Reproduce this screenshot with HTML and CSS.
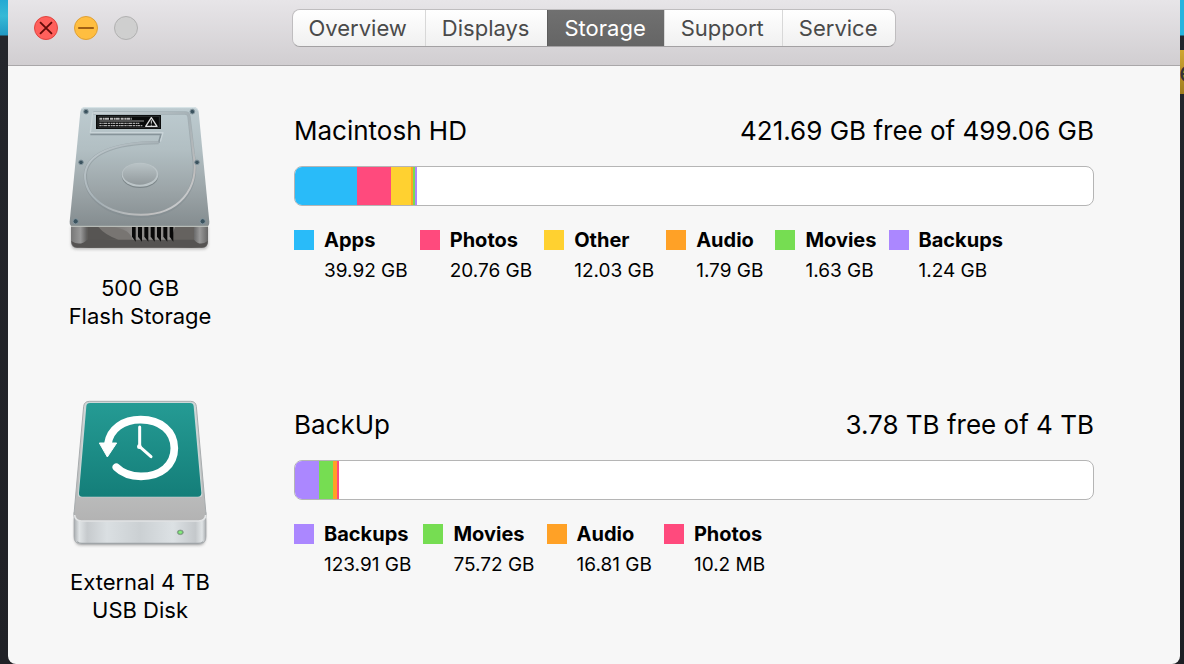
FILE: index.html
```html
<!DOCTYPE html>
<html lang="en">
<head>
  <meta charset="UTF-8" />
  <meta name="viewport" content="width=device-width, initial-scale=1" />
  <title>Storage</title>
  <link rel="stylesheet" href="styles.css">
</head>
<body>
  <div class="desktop-left"></div>

  <div class="window">
    <header class="titlebar">
      <div class="controls">
        <button class="control close" type="button" aria-label="Close">
          <svg viewBox="0 0 24 24"><path d="M5.5 5.5 18.5 18.5M18.5 5.5 5.5 18.5" /></svg>
        </button>
        <button class="control minimize" type="button" aria-label="Minimize">
          <svg viewBox="0 0 24 24"><path d="M3.5 12H20.5" /></svg>
        </button>
        <button class="control zoom" type="button" aria-label="Zoom" disabled></button>
      </div>
      <nav class="tabs">
        <button type="button">Overview</button>
        <button type="button">Displays</button>
        <button type="button" class="active">Storage</button>
        <button type="button">Support</button>
        <button type="button">Service</button>
      </nav>
    </header>

    <main>
      <section class="volume">
        <div class="drive">
          <svg class="drive-icon" viewBox="0 0 480 495" aria-hidden="true">
            <defs>
              <linearGradient id="hdTop" x1="0" y1="0" x2="0" y2="1">
                <stop offset="0" stop-color="#bdcbd0" />
                <stop offset=".35" stop-color="#b2bfc3" />
                <stop offset=".7" stop-color="#9ba4a7" />
                <stop offset="1" stop-color="#848c8f" />
              </linearGradient>
              <linearGradient id="hdFront" x1="0" y1="0" x2="1" y2="0">
                <stop offset="0" stop-color="#777" />
                <stop offset=".07" stop-color="#999" />
                <stop offset=".13" stop-color="#4c4b4a" />
                <stop offset=".3" stop-color="#777573" />
                <stop offset=".43" stop-color="#8c8a88" />
                <stop offset=".75" stop-color="#8d8b89" />
                <stop offset=".88" stop-color="#555" />
                <stop offset=".94" stop-color="#999" />
                <stop offset="1" stop-color="#666" />
              </linearGradient>
              <linearGradient id="hdRidge" x1="0" y1="0" x2="1" y2="1">
                <stop offset="0" stop-color="#cdd6da" />
                <stop offset=".5" stop-color="#a5b0b5" />
                <stop offset=".8" stop-color="#c0bfbf" />
                <stop offset="1" stop-color="#d3dbe0" />
              </linearGradient>
              <linearGradient id="hdHub" x1="0" y1="0" x2="0" y2="1">
                <stop offset="0" stop-color="#b9c3c6" />
                <stop offset="1" stop-color="#929a9d" />
              </linearGradient>
              <filter id="soft" x="-10%" y="-10%" width="120%" height="120%">
                <feGaussianBlur stdDeviation="5" />
              </filter>
            </defs>
            <path d="M34 395H444V448Q444 463 428 463H50Q34 463 34 448Z" fill="#888" opacity=".6" filter="url(#soft)" />
            <path d="M33 390H444V440Q444 458 426 458H51Q33 458 33 440Z" fill="url(#hdFront)" />
            <path d="M82 396H150Q215 400 218 440H82Z" fill="#787572" />
            <path d="M82 396H115Q135 420 175 434L82 436Z" fill="#575553" />
            <path d="M345 396H402V440H330Z" fill="#65625f" />
            <path d="M34 438Q60 455 82 434H402Q420 455 443 438Q442 458 426 458H51Q36 458 34 438Z" fill="#555352" />
            <g fill="#090909">
              <path d="M216 396H227V440L216 425Z" /><path d="M234 396H246V440L234 425Z" />
              <path d="M253 396H265V440L253 425Z" /><path d="M272 396H284V440L272 425Z" />
              <path d="M291 396H303V440L291 425Z" /><path d="M310 396H322V440L310 425Z" />
              <path d="M329 396H340V440L329 425Z" />
            </g>
            <path d="M75 37H402Q414 37 416 51L448 380Q449 395 436 395H43Q28 395 29 380L61 51Q63 37 75 37Z" fill="url(#hdTop)" />
            <path d="M64 41Q69 38 77 38H402Q411 38 414 47" fill="none" stroke="#dae5e9" stroke-width="3" />
            <path d="M33 394H444" stroke="#c5c8c2" stroke-width="3" />
            <path d="M91 118H303L296 143" fill="none" stroke="#87949a" stroke-width="5" stroke-linejoin="round" />
            <path d="M98 53L91 113H309L301 140" fill="none" stroke="#c9d4d8" stroke-width="4" stroke-linejoin="round" />
            <path d="M100 54H375Q386 54 387 65L400 180C419 285 358 363 243 363C139 363 75 307 76 240C79 180 157 143 296 143" fill="none" stroke="#7d888c" stroke-width="10" opacity=".4" />
            <path d="M100 54H375Q386 54 387 65L401 180C419 282 356 359 243 359C139 359 74 303 75 240C79 178 157 142 296 142" fill="none" stroke="url(#hdRidge)" stroke-width="6" />
            <ellipse cx="240" cy="243" rx="55" ry="36" fill="#7d878a" />
            <ellipse cx="240" cy="239" rx="55" ry="36" fill="#bcc5c8" />
            <ellipse cx="239" cy="237" rx="51" ry="32" fill="url(#hdHub)" />
            <path d="M108 60H303V102H108Z" fill="#0a0b0b" />
            <path d="M114 64H298V98H114Z" fill="none" stroke="#737a7c" stroke-width="1" />
            <path d="M118 71H216" stroke="#bbb" stroke-width="6" stroke-dasharray="9 2 5 1 12 3" />
            <path d="M118 78H252" stroke="#ddd" stroke-width="2" />
            <path d="M118 85H238M118 92H247" stroke="#aaa" stroke-width="4" stroke-dasharray="7 2 4 1 9 2" />
            <path d="M274 68L291 94H257Z" fill="none" stroke="#ddd" stroke-width="4" stroke-linejoin="round" />
            <path d="M274 76V86M274 89V92" stroke="#ddd" stroke-width="3" />
            <g fill="#3b535f" stroke="#86979f" stroke-width="3">
              <circle cx="78" cy="50" r="7" /><circle cx="397" cy="50" r="7" />
              <circle cx="63" cy="202" r="7" /><circle cx="411" cy="202" r="7" />
              <circle cx="47" cy="379" r="8" /><circle cx="428" cy="379" r="8" />
            </g>
          </svg>
          <p>500 GB<br>Flash Storage</p>
        </div>
        <div class="usage">
          <div class="heading">
            <h2>Macintosh HD</h2>
            <span>421.69 GB free of 499.06 GB</span>
          </div>
          <div class="bar">
            <i class="apps" style="width: 7.8%"></i>
            <i class="photos" style="width: 4.25%"></i>
            <i class="other" style="width: 2.5%"></i>
            <i class="audio" style="width: .25%"></i>
            <i class="movies" style="width: .25%"></i>
            <i class="backups" style="width: .25%"></i>
          </div>
          <ul class="legend">
            <li><i class="apps"></i><div><b>Apps</b><span>39.92 GB</span></div></li>
            <li><i class="photos"></i><div><b>Photos</b><span>20.76 GB</span></div></li>
            <li><i class="other"></i><div><b>Other</b><span>12.03 GB</span></div></li>
            <li><i class="audio"></i><div><b>Audio</b><span>1.79 GB</span></div></li>
            <li><i class="movies"></i><div><b>Movies</b><span>1.63 GB</span></div></li>
            <li><i class="backups"></i><div><b>Backups</b><span>1.24 GB</span></div></li>
          </ul>
        </div>
      </section>

      <section class="volume">
        <div class="drive">
          <svg class="drive-icon" viewBox="0 0 480 495" aria-hidden="true">
            <defs>
              <linearGradient id="tmTeal" x1="0" y1="0" x2="0" y2="1">
                <stop offset="0" stop-color="#259b94" />
                <stop offset="1" stop-color="#147e79" />
              </linearGradient>
              <linearGradient id="tmFront" x1="0" y1="0" x2="1" y2="0">
                <stop offset="0" stop-color="#a8acaf" />
                <stop offset=".04" stop-color="#e0e4e6" />
                <stop offset=".1" stop-color="#c6cacd" />
                <stop offset=".25" stop-color="#dadfe2" />
                <stop offset=".5" stop-color="#cbd0d3" />
                <stop offset=".75" stop-color="#dce1e4" />
                <stop offset=".92" stop-color="#c4c8cb" />
                <stop offset=".97" stop-color="#e0e4e6" />
                <stop offset="1" stop-color="#a8acaf" />
              </linearGradient>
              <linearGradient id="tmTop" x1="0" y1="0" x2="0" y2="1">
                <stop offset="0" stop-color="#d5d8d9" />
                <stop offset="1" stop-color="#b3b3b3" />
              </linearGradient>
            </defs>
            <path d="M44 390H436V446Q436 469 414 469H66Q44 469 44 446Z" fill="#777" opacity=".6" filter="url(#soft)" />
            <path d="M42 370H438V443Q438 465 416 465H64Q42 465 42 443Z" fill="url(#tmFront)" stroke="#a4a8aa" stroke-width="2" />
            <path d="M88 37H392Q407 37 409 52L438 375Q438 395 417 395H63Q42 395 42 375L71 52Q73 37 88 37Z" fill="url(#tmTop)" stroke="#a7acae" stroke-width="3" />
            <path d="M44 378Q45 395 64 396H416Q436 395 437 378" fill="none" stroke="#e3e5e6" stroke-width="5" />
            <path d="M51 458Q57 463 66 463H414Q424 463 430 458" fill="none" stroke="#a0a5a8" stroke-width="4" />
            <path d="M88 40H392Q404 40 406 52L427 315Q428 325 417 325H63Q53 325 54 315L75 52Q76 40 88 40Z" fill="#cbd7d7" />
            <path d="M90 42H390Q400 42 401 52L424 312Q424 323 413 323H67Q56 323 57 312L79 52Q80 42 90 42Z" fill="url(#tmTeal)" />
            <path d="M144 163C151 120 189 92 242 92C302 92 343 127 343 178C343 228 303 262 243 262C213 262 187 253 169 235" fill="none" stroke="#fff" stroke-width="23" stroke-linecap="round" />
            <path d="M118 162H170L142 204Z" fill="#fff" stroke="#fff" stroke-width="3" stroke-linejoin="round" />
            <path d="M239 114V173L273 203" fill="none" stroke="#fff" stroke-width="9" stroke-linecap="round" stroke-linejoin="round" />
            <circle cx="238" cy="173" r="7" fill="#fff" />
            <ellipse cx="361" cy="430" rx="9" ry="7" fill="#6fae73" stroke="#869389" stroke-width="2" />
            <ellipse cx="361" cy="430" rx="5" ry="4" fill="#85ee7b" />
          </svg>
          <p>External 4 TB<br>USB Disk</p>
        </div>
        <div class="usage">
          <div class="heading">
            <h2>BackUp</h2>
            <span>3.78 TB free of 4 TB</span>
          </div>
          <div class="bar">
            <i class="backups" style="width: 3%"></i>
            <i class="movies" style="width: 1.75%"></i>
            <i class="audio" style="width: .5%"></i>
            <i class="photos" style="width: .25%"></i>
          </div>
          <ul class="legend">
            <li><i class="backups"></i><div><b>Backups</b><span>123.91 GB</span></div></li>
            <li><i class="movies"></i><div><b>Movies</b><span>75.72 GB</span></div></li>
            <li><i class="audio"></i><div><b>Audio</b><span>16.81 GB</span></div></li>
            <li><i class="photos"></i><div><b>Photos</b><span>10.2 MB</span></div></li>
          </ul>
        </div>
      </section>
    </main>
  </div>

  <div class="desktop-right"><span>e</span></div>
</body>
</html>
```

FILE: styles.css
```css
:root {
  --blue: #29bbf9;
  --pink: #ff4a7d;
  --yellow: #ffd130;
  --orange: #ffa126;
  --green: #76dd52;
  --purple: #ab87ff;
}
* {
  margin: 0;
  padding: 0;
  box-sizing: border-box;
}
body {
  display: flex;
  min-height: 100vh;
  background: #202126;
  color: #000;
  font-family: Inter, "Liberation Sans", sans-serif;
}
button {
  border: 0;
  font: inherit;
}

/* desktop behind the window */
.desktop-left {
  width: 8px;
  background: linear-gradient(#24a9d3, #35b9d6 16px, #2098c3 35px, #24262c 36px, #202126);
}
.desktop-right {
  width: 4px;
  overflow: hidden;
  padding-top: 50px;
  background: linear-gradient(#25b4de 35px, #23262c 36px, #1c1e23);
}
.desktop-right span {
  display: block;
  height: 44px;
  background: linear-gradient(#d0a631, #9f7d20);
  color: #333;
  font-size: 28px;
  line-height: 44px;
  text-indent: -1px;
}

.window {
  display: flex;
  flex: 1;
  flex-direction: column;
  overflow: hidden;
  border-radius: 0 0 8px 8px;
  background: #f7f7f7;
}
.titlebar {
  display: grid;
  grid-template-columns: 1fr auto 1fr;
  align-items: start;
  height: 66px;
  padding: 9px 26px;
  border-bottom: 1px solid #a9a7a9;
  background: linear-gradient(#e7e5e8, #d1ced1);
}
.controls {
  display: flex;
  gap: 16px;
  padding-top: 7px;
}
.control {
  width: 24px;
  height: 24px;
  border: 1px solid #e0443f;
  border-radius: 50%;
  background: #ff605c;
}
.control svg {
  display: block;
  width: 22px;
  height: 22px;
  fill: none;
  stroke: #640b09;
  stroke-width: 2;
}
.minimize {
  border-color: #dfa035;
  background: #ffbe40;
}
.minimize svg {
  stroke: #985712;
}
.zoom {
  border-color: #b1b1b1;
  background: #cfcfcf;
}
.tabs {
  display: flex;
  overflow: hidden;
  border: 1px solid #bfbdbf;
  border-bottom-color: #a3a1a3;
  border-radius: 8px;
}
.tabs button {
  height: 36px;
  padding: 0 18px 0 16px;
  border-left: 1px solid #d8d8d8;
  background: linear-gradient(#fff, #f0f0f0);
  color: #4a4a4a;
  font-size: 22px;
  line-height: 36px;
}
.tabs button:first-child {
  border-left: 0;
}
.tabs .active {
  border-color: #5d5d5d;
  background: linear-gradient(#707070, #656565);
  color: #fff;
}

main {
  display: flex;
  flex-direction: column;
  gap: 59px;
  padding: 29px 86px 0 46px;
}
.volume {
  display: flex;
  gap: 68px;
}
.drive {
  width: 172px;
  text-align: center;
  font-size: 22px;
  line-height: 28px;
}
.drive-icon {
  display: block;
  width: 160px;
  height: 165px;
  margin: 0 auto 14px;
}
.usage {
  flex: 1;
  padding-top: 20px;
}
.heading {
  display: flex;
  justify-content: space-between;
  font-size: 26px;
  line-height: 32px;
}
.heading h2 {
  font: inherit;
}
.bar {
  display: flex;
  height: 40px;
  margin: 19px 0;
  overflow: hidden;
  border: 1px solid #b5b5b5;
  border-radius: 8px;
  background: #fff;
}
.legend {
  display: flex;
  gap: 12px;
  list-style: none;
}
.legend li {
  display: flex;
  gap: 10px;
}
.legend i {
  width: 20px;
  height: 20px;
  margin-top: 5px;
}
.legend b,
.legend span {
  display: block;
  font-size: 20px;
  line-height: 30px;
}
.legend span {
  font-size: 19px;
  line-height: 32px;
}

.apps { background: var(--blue); }
.photos { background: var(--pink); }
.other { background: var(--yellow); }
.audio { background: var(--orange); }
.movies { background: var(--green); }
.backups { background: var(--purple); }
```
